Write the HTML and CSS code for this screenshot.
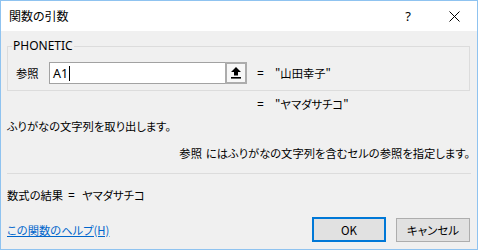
FILE: index.html
```html
<!DOCTYPE html>
<html lang="ja">
<head>
<meta charset="utf-8">
<title>関数の引数</title>
<link rel="stylesheet" href="styles.css">
</head>
<body>
<div class="window">
  <div class="titlebar">
    <span class="title">関数の引数</span>
    <span class="spacer"></span>
    <span class="tbtn help">?</span>
    <span class="tbtn close">
      <svg width="11" height="11" viewBox="0 0 11 11"><path d="M0.5 0.5 L10.5 10.5 M10.5 0.5 L0.5 10.5" stroke="#000" stroke-width="1" fill="none"/></svg>
    </span>
  </div>
  <div class="content">
    <div class="group">
      <span class="legend">PHONETIC</span>
      <div class="argrow">
        <span class="arglabel">参照</span>
        <span class="input"><span class="val">A1</span><span class="caret"></span></span>
        <span class="refbtn">
          <svg width="10" height="12" viewBox="0 0 10 12"><polygon points="5,0 10,5 7,5 7,8.5 3,8.5 3,5 0,5" fill="#000"/><rect x="0" y="10" width="10" height="1.6" fill="#000"/></svg>
        </span>
        <span class="eq">=</span>
        <span class="argval">"山田幸子"</span>
      </div>
    </div>
    <div class="resultrow"><span class="eq">=</span><span class="argval">"ヤマダサチコ"</span></div>
    <div class="desc">ふりがなの文字列を取り出します。</div>
    <div class="argdesc"><span class="argname">参照</span>にはふりがなの文字列を含むセルの参照を指定します。</div>
    <div class="sep"></div>
    <div class="formula">数式の結果<span class="feq">=</span><span class="fval">ヤマダサチコ</span></div>
    <div class="footer">
      <a class="helplink" href="#">この関数のヘルプ(H)</a>
      <span class="spacer"></span>
      <button class="btn ok">OK</button>
      <button class="btn cancel">キャンセル</button>
    </div>
  </div>
</div>
</body>
</html>
```
FILE: styles.css
```css
html, body {
  margin: 0;
  padding: 0;
  background: #f0f0f0;
}
body {
  font-family: "Noto Sans CJK JP", "Noto Sans", sans-serif;
  font-size: 11.3px;
  font-feature-settings: "palt";
  color: #000;
}
.window {
  width: 478px;
  height: 250px;
  box-sizing: border-box;
  border: 1px solid #8fc3f0;
  display: flex;
  flex-direction: column;
  background: #f0f0f0;
}
.titlebar {
  height: 30px;
  background: #fff;
  display: flex;
  align-items: center;
  padding-left: 8px;
  flex: none;
}
.title {
  font-size: 12px;
  line-height: 16px;
  margin-top: -1px;
}
.spacer { flex: 1; }
.tbtn {
  width: 46px;
  height: 30px;
  display: flex;
  align-items: center;
  justify-content: center;
}
.help {
  font-family: "Noto Sans", sans-serif;
  font-size: 13px;
}
.close svg { display: block; }
.content {
  flex: 1;
  padding: 0 7px 0 6px;
  display: flex;
  flex-direction: column;
}
.group {
  margin-top: 15px;
  height: 45px;
  box-sizing: border-box;
  border: 1px solid #dcdcdc;
}
.legend {
  display: block;
  width: max-content;
  margin: -8px 0 0 4px;
  padding: 0 1px;
  background: #f0f0f0;
  line-height: 14px;
  font-family: "Noto Sans", sans-serif;
  font-size: 12px;
}
.argrow {
  display: flex;
  align-items: center;
  height: 22px;
  margin-top: 9px;
  padding-left: 8px;
}
.arglabel {
  width: 33px;
  line-height: 16px;
}
.input {
  width: 176px;
  height: 22px;
  box-sizing: border-box;
  border: 1px solid #a2a2a2;
  border-right: none;
  background: #fff;
  display: flex;
  align-items: center;
  padding-left: 3px;
  font-family: "Noto Sans", sans-serif;
  font-size: 12.5px;
}
.caret {
  width: 1px;
  height: 15px;
  background: #000;
  margin-left: 1px;
}
.refbtn {
  width: 22px;
  height: 22px;
  box-sizing: border-box;
  border: 2px solid #acacac;
  background: #f7f7f7;
  display: flex;
  align-items: center;
  justify-content: center;
}
.refbtn svg { display: block; }
.eq {
  display: inline-block;
  width: 18px;
  margin-left: 10px;
  font-family: "Noto Sans", sans-serif;
  font-size: 12px;
}
.argval { line-height: 16px; }
.resultrow {
  margin-top: 5px;
  line-height: 16px;
  padding-left: 240px;
}
.desc {
  margin-top: 5px;
  line-height: 16px;
}
.argdesc {
  margin-top: 11px;
  line-height: 16px;
  text-align: right;
}
.argname { margin-right: 4px; }
.sep {
  margin-top: 12px;
  height: 1px;
  background: #dcdcdc;
  margin-right: -1px;
}
.formula {
  margin-top: 13px;
  line-height: 16px;
}
.feq {
  font-family: "Noto Sans", sans-serif;
  font-size: 12px;
  margin-left: 5px;
}
.fval { margin-left: 7px; }
.footer {
  margin-top: 13px;
  display: flex;
  align-items: center;
  height: 25px;
}
.helplink {
  color: #0066cc;
  text-decoration: underline;
  line-height: 16px;
}
.btn {
  width: 74px;
  height: 25px;
  box-sizing: border-box;
  background: #e1e1e1;
  font-family: "Noto Sans CJK JP", "Noto Sans", sans-serif;
  font-size: 11.5px;
  font-feature-settings: "palt";
  color: #000;
  padding: 0;
  margin: 0;
}
.ok {
  border: 2px solid #0078d7;
}
.cancel {
  border: 1px solid #adadad;
  margin-left: 10px;
  height: 24px;
}
```
